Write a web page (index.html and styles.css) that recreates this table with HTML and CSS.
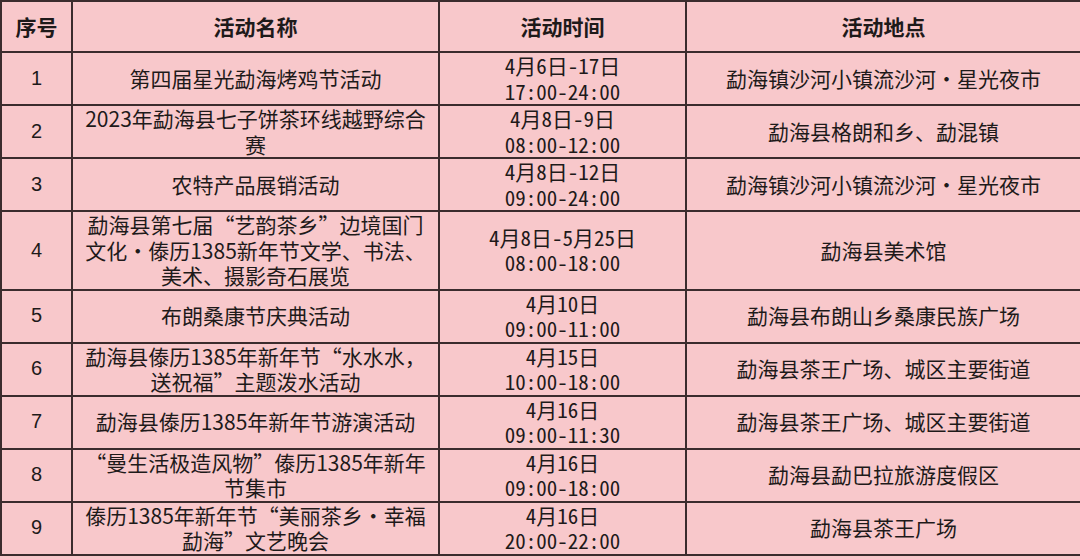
FILE: index.html
```html
<!DOCTYPE html>
<html lang="zh-CN">
<head>
<meta charset="utf-8">
<title>活动安排</title>
<link rel="stylesheet" href="styles.css">
</head>
<body>
<table class="events">
  <colgroup>
    <col class="c-no">
    <col class="c-name">
    <col class="c-time">
    <col class="c-place">
  </colgroup>
  <thead>
    <tr>
      <th>序号</th>
      <th>活动名称</th>
      <th>活动时间</th>
      <th>活动地点</th>
    </tr>
  </thead>
  <tbody>
    <tr><td class="no">1</td><td>第四届星光勐海烤鸡节活动</td><td class="time">4月6日-17日<br>17:00-24:00</td><td>勐海镇沙河小镇流沙河・星光夜市</td></tr>
    <tr><td class="no">2</td><td>2023年勐海县七子饼茶环线越野综合赛</td><td class="time">4月8日-9日<br>08:00-12:00</td><td>勐海县格朗和乡、勐混镇</td></tr>
    <tr><td class="no">3</td><td>农特产品展销活动</td><td class="time">4月8日-12日<br>09:00-24:00</td><td>勐海镇沙河小镇流沙河・星光夜市</td></tr>
    <tr><td class="no">4</td><td>勐海县第七届“艺韵茶乡”边境国门文化・傣历1385新年节文学、书法、美术、摄影奇石展览</td><td class="time">4月8日-5月25日<br>08:00-18:00</td><td>勐海县美术馆</td></tr>
    <tr><td class="no">5</td><td>布朗桑康节庆典活动</td><td class="time">4月10日<br>09:00-11:00</td><td>勐海县布朗山乡桑康民族广场</td></tr>
    <tr><td class="no">6</td><td>勐海县傣历1385年新年节“水水水，送祝福”主题泼水活动</td><td class="time">4月15日<br>10:00-18:00</td><td>勐海县茶王广场、城区主要街道</td></tr>
    <tr><td class="no">7</td><td>勐海县傣历1385年新年节游演活动</td><td class="time">4月16日<br>09:00-11:30</td><td>勐海县茶王广场、城区主要街道</td></tr>
    <tr><td class="no">8</td><td>“曼生活极造风物”傣历1385年新年节集市</td><td class="time">4月16日<br>09:00-18:00</td><td>勐海县勐巴拉旅游度假区</td></tr>
    <tr><td class="no">9</td><td>傣历1385年新年节“美丽茶乡・幸福勐海”文艺晚会</td><td class="time">4月16日<br>20:00-22:00</td><td>勐海县茶王广场</td></tr>
  </tbody>
</table>
</body>
</html>
```

FILE: styles.css
```css
html, body {
  margin: 0;
  padding: 0;
  background: #f8c8cb;
}

.events {
  width: 1080px;
  border-collapse: collapse;
  table-layout: fixed;
  background: #f8c8cb;
  color: #1e1a1a;
  font-family: "Noto Sans CJK SC", "Noto Sans", sans-serif;
  font-size: 21px;
  line-height: 25.5px;
}

.c-no { width: 71px; }
.c-name { width: 367px; }
.c-time { width: 247px; }
.c-place { width: 395px; }

.events th,
.events td {
  border: 2px solid #3b2c2d;
  text-align: center;
  vertical-align: middle;
  padding: 0 8px;
}

.events th {
  height: 49px;
  font-weight: 700;
  padding: 0;
}

.events td.no {
  font-family: "Liberation Sans", "Noto Sans CJK SC", sans-serif;
  font-size: 20px;
  padding: 0;
}

.events td.time {
  font-feature-settings: "hwid" 1;
  padding: 0 4px;
}
```
